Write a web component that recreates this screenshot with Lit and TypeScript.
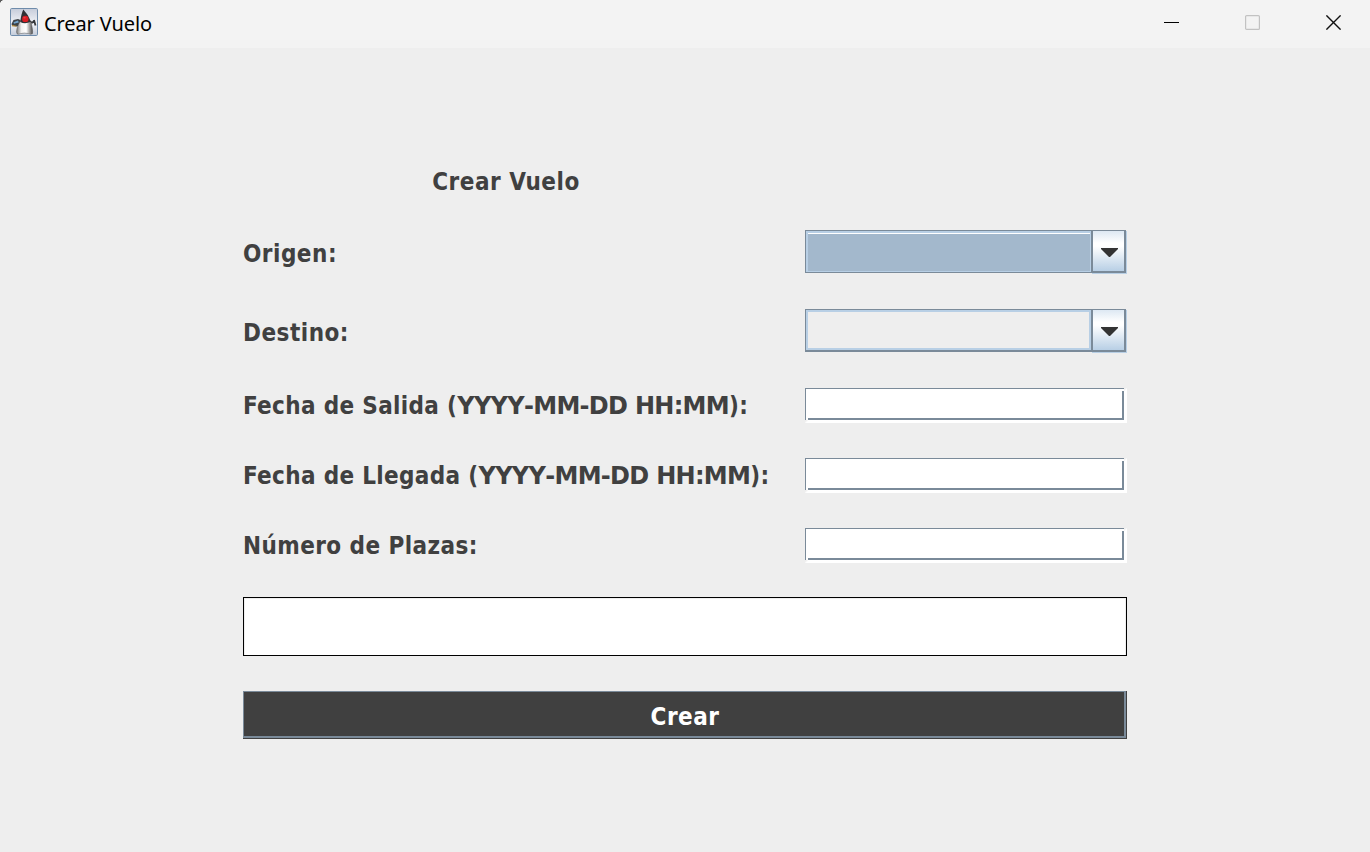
import { LitElement, html, css, svg } from "lit";
import { customElement, property } from "lit/decorators.js";

@customElement("duke-icon")
class DukeIcon extends LitElement {
  static styles = css`
    :host { display: block; width: 28px; height: 28px; }
    svg { display: block; }
  `;
  render() {
    return html`<svg width="28" height="28" viewBox="0 0 28 28">
      <defs>
        <linearGradient id="bg" x1="0" y1="0" x2="0" y2="1">
          <stop offset="0" stop-color="#c6ccda" /><stop offset=".55" stop-color="#f1f3f7" /><stop offset="1" stop-color="#c3cbd9" />
        </linearGradient>
        <linearGradient id="body" x1="0" y1="0" x2="1" y2="0">
          <stop offset="0" stop-color="#777" /><stop offset=".3" stop-color="#f0f0f0" /><stop offset=".6" stop-color="#ffffff" /><stop offset="1" stop-color="#4c4c4c" />
        </linearGradient>
      </defs>
      <rect x=".5" y=".5" width="27" height="27" rx="1.2" fill="url(#bg)" stroke="#6f8cab" />
      <path d="M1.5 16 L3.5 12 L8 11 L10.5 12 L10 17 L7 18.5 L2 17.5 Z" fill="#3d4247" />
      <path d="M3.5 14.2 L8 12.4 L8.8 14.6 L4 15.8 Z" fill="#72a3cb" />
      <path d="M2 17.6 L6.5 18.2" stroke="#b58b36" stroke-width="1.1" />
      <path d="M20 13.5 Q22.5 16 24.3 12.5 M24 12 L25.5 17.5" fill="none" stroke="#36383b" stroke-width="1.8" />
      <path d="M10.3 13 Q8 16.5 7 20.5 Q6 24.5 7.2 26 Q8.8 26.6 10.4 25.6 Q14.5 24.6 18.6 25.6 Q20.6 26.8 22.4 25.8 Q23.2 22 20.6 13 Z" fill="url(#body)" stroke="#555" stroke-width=".5" />
      <path d="M13.3 1.6 Q11.2 6 10.2 14 Q15 16.6 21 13.8 Q18.3 6.5 13.3 1.6Z" fill="#303135" />
      <circle cx="15.3" cy="10.9" r="3.2" fill="#d91d24" />
      <ellipse cx="14.5" cy="9.7" rx="1.3" ry=".8" fill="#e8454b" />
    </svg>`;
  }
}

@customElement("title-bar")
class TitleBar extends LitElement {
  static styles = css`
    :host { display: flex; height: 48px; background: #f3f3f3; align-items: flex-start;
      background-image: radial-gradient(circle at 4px 4px, transparent 0 3.6px, #5a5a5a 4.2px), radial-gradient(circle at 0 3px, transparent 0 3px, #8a8a8a 3.4px);
      background-size: 4px 4px, 2px 3px; background-position: 0 0, 100% 0; background-repeat: no-repeat; }
    .icon { margin: 8px 0 0 10px; }
    .name { margin-left: 6px; font: 20px/48px "Noto Sans", sans-serif; color: #000; flex: 1; letter-spacing: -0.1px; white-space: nowrap; }
    .controls { display: flex; margin-right: -4px; }
    .control { width: 81px; height: 45px; display: flex; align-items: center; justify-content: center; }
  `;
  render() {
    const shapes = [
      svg`<path d="M0 7.5H15" stroke="#000" />`,
      svg`<rect x=".6" y=".6" width="13.8" height="13.8" rx="1" stroke="#c2c2c2" stroke-width="1.2" />`,
      svg`<path d="M.4 .4L14.6 14.6M14.6 .4L.4 14.6" stroke="#111" stroke-width="1.4" />`,
    ];
    return html`<duke-icon class="icon"></duke-icon>
      <div class="name">Crear Vuelo</div>
      <div class="controls">
        ${shapes.map((s) => html`<div class="control"><svg width="15" height="15" viewBox="0 0 15 15" fill="none">${s}</svg></div>`)}
      </div>`;
  }
}

@customElement("metal-combo")
class MetalCombo extends LitElement {
  @property({ type: Boolean }) focused = false;
  static styles = css`
    :host { display: flex; width: 322px; height: 44px; }
    .value { box-sizing: border-box; width: 286px; height: 43px; border: 1px solid #7a8a99; border-right: 0;
      box-shadow: inset 2px 2px #b8cfe5, inset -1px -1px #b8cfe5; padding: 2px 1px 1px 2px; }
    .plain { border-bottom-width: 2px; box-shadow: inset 2px 2px #b8cfe5, inset -2px -2px #b8cfe5; }
    .selection { height: 100%; box-sizing: border-box; }
    .focused .selection { background: #a3b8cc; border-top: 1px solid #fff; }
    .arrow { box-sizing: border-box; width: 35px; height: 43px; border: solid #7a8a99; border-width: 1px 2px 2px;
      padding-left: 8px; box-shadow: 1px 1px #b8cfe5;
      background: linear-gradient(#dde8f3, #fff 30%, #fff 38%, #b8cfe5); }
    svg { display: block; margin-top: 17px; }
  `;
  render() {
    return html`<div class="value ${this.focused ? "focused" : "plain"}"><div class="selection"></div></div>
      <div class="arrow"><svg width="17" height="9" viewBox="0 0 17 9"><path d="M0 0H17V1L9 9H8L0 1Z" fill="#333" /></svg></div>`;
  }
}

@customElement("metal-field")
class MetalField extends LitElement {
  static styles = css`
    :host { display: block; }
    .edge { box-sizing: border-box; width: 322px; height: 35px; background:
      linear-gradient(#7a8a99, #7a8a99) 0 0 / 319px 1px no-repeat,
      linear-gradient(#7a8a99, #7a8a99) 0 0 / 1px 32px no-repeat,
      linear-gradient(#7a8a99, #7a8a99) 3px 30px / 316px 2px no-repeat,
      linear-gradient(#7a8a99, #7a8a99) 317px 3px / 2px 29px no-repeat,
      linear-gradient(135deg, #eee 1px, #fff 3px) 319px 0 / 3px 3px no-repeat,
      linear-gradient(135deg, #eee 1px, #fff 3px) 0 32px / 3px 3px no-repeat,
      #fff; }
  `;
  render() {
    return html`<div class="edge"></div>`;
  }
}

@customElement("app-root")
class AppRoot extends LitElement {
  static styles = css`
    :host { display: flex; flex-direction: column; height: 100vh; background: #eee; overflow: hidden; }
    .form { display: grid; margin: 118px 0 0 243px; grid-template-columns: 527px 322px; column-gap: 35px; row-gap: 35px;
      grid-template-rows: 29px 44px 44px 35px 35px 34px 59px 48px;
      font: bold 24px/30px "DejaVu Sans Condensed", "DejaVu Sans", sans-serif; font-stretch: condensed; color: #404040;
      letter-spacing: 0.5px; }
    .label { align-self: center; white-space: nowrap; }
    .title { text-align: center; padding-top: 2px; padding-right: 1px; }
    .combo { padding-top: 4px; }
    .count { padding-top: 2px; letter-spacing: 0.42px; }
    .date { letter-spacing: 0.33px; }
    .mask { font-family: "DejaVu Sans", sans-serif; font-stretch: normal; font-kerning: none; letter-spacing: -0.7px; }
    .title, .combo { grid-column: 1; }
    .message { grid-column: 1 / 3; border: 1px solid #000; background: #fff; box-shadow: inset 1px 1px #eee, inset -1px 0 #eee; }
    .create { grid-column: 1 / 3; box-sizing: border-box; background: #404040; color: #fff; text-align: center;
      border: solid #7a8a99; border-width: 1px 2px 2px 1px; margin: 0 1px 1px 0; box-shadow: 1px 0 #404040, 0 1px #404040, 1px 1px #404040;
      padding-left: 2px; line-height: 50px; height: 47px; }
  `;
  render() {
    return html`<title-bar></title-bar>
      <main class="form">
        <div class="label title">Crear Vuelo</div>
        <div class="label combo">Origen:</div><metal-combo focused></metal-combo>
        <div class="label combo">Destino:</div><metal-combo></metal-combo>
        <div class="label date">Fecha de Salida (<span class="mask">YYYY-MM-DD HH:MM</span>):</div><metal-field></metal-field>
        <div class="label date">Fecha de Llegada (<span class="mask">YYYY-MM-DD HH:MM</span>):</div><metal-field></metal-field>
        <div class="label count">Número de Plazas:</div><metal-field></metal-field>
        <div class="message"></div>
        <div class="create">Crear</div>
      </main>`;
  }
}
